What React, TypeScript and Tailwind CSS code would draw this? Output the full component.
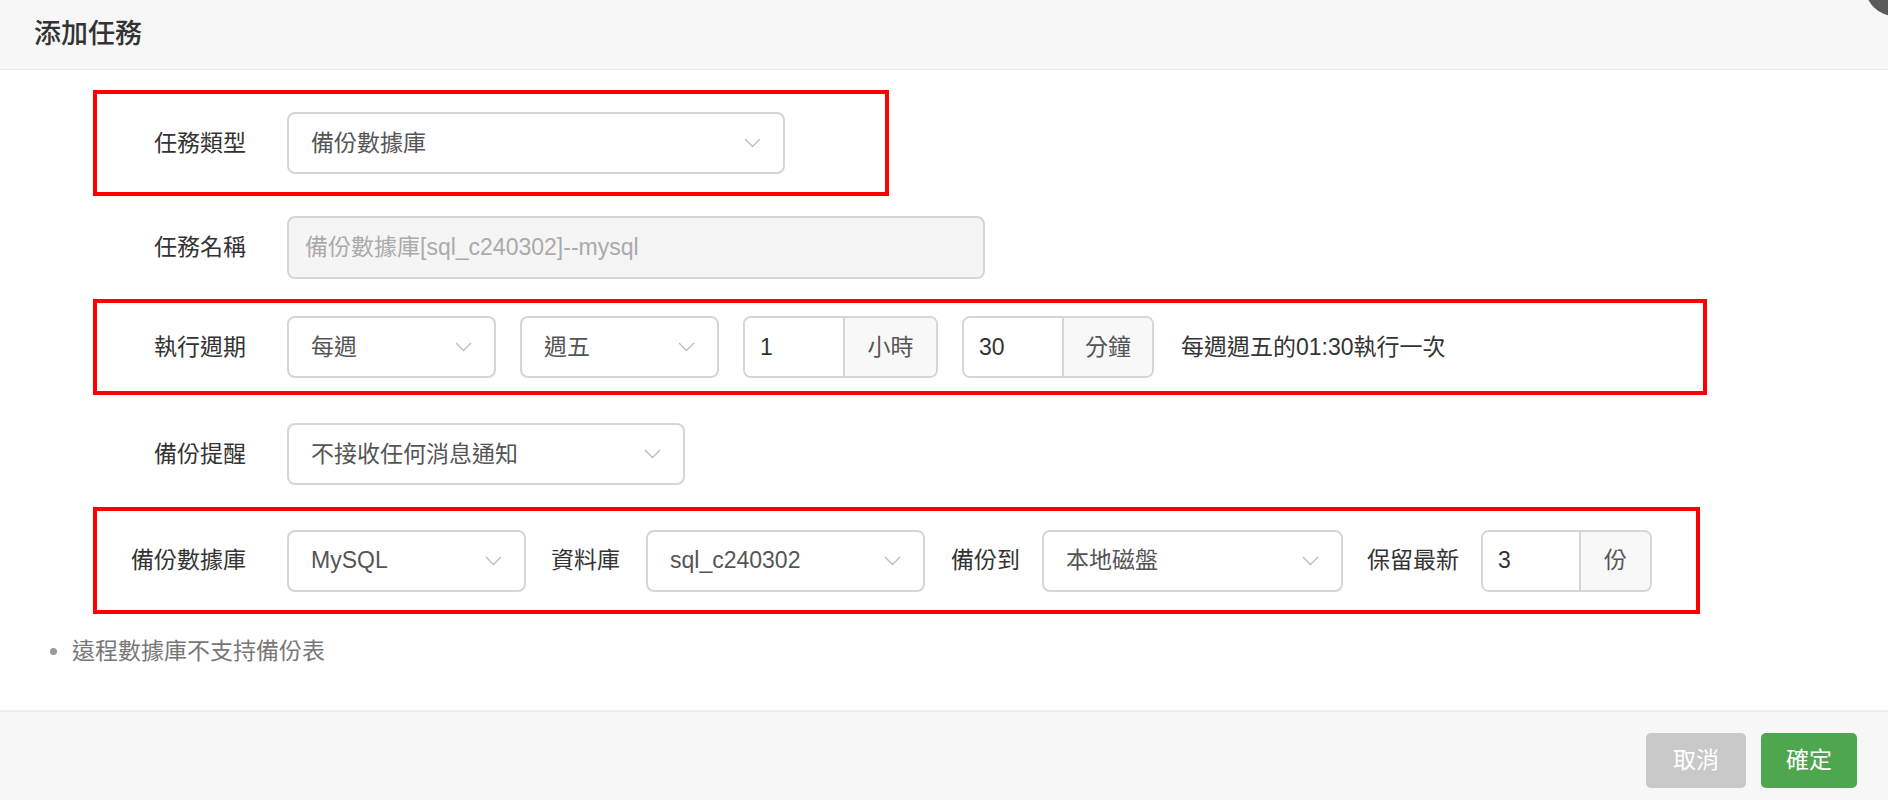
import React from 'react';

const Chevron: React.FC = () => (
  <svg width="17" height="10" viewBox="0 0 17 10" fill="none" className="shrink-0">
    <polyline points="1,1 8.5,8.5 16,1" stroke="#bdbdbd" strokeWidth="1.4" />
  </svg>
);

const Select: React.FC<{ value: string; className: string }> = ({ value, className }) => (
  <div
    className={`flex h-[62px] shrink-0 items-center justify-between rounded-[8px] border-2 border-[#d6d6d6] bg-white pl-[22px] pr-[22px] text-[#555] ${className}`}
  >
    <span>{value}</span>
    <Chevron />
  </div>
);

const UnitInput: React.FC<{ value: string; unit: string; inputW: string; unitW: string }> = ({
  value,
  unit,
  inputW,
  unitW,
}) => (
  <div className="flex h-[62px] shrink-0 overflow-hidden rounded-[8px] border-2 border-[#d6d6d6]">
    <div className={`flex items-center bg-white pl-[15px] text-[#333] ${inputW}`}>{value}</div>
    <div className={`flex items-center justify-center border-l-2 border-[#d6d6d6] bg-[#f8f8f9] text-[#555] ${unitW}`}>
      {unit}
    </div>
  </div>
);

const Row: React.FC<{ label: string; className: string; children: React.ReactNode }> = ({
  label,
  className,
  children,
}) => (
  <div className={`ml-[93px] flex items-center border-4 ${className}`}>
    <div className="w-[149px] shrink-0 text-right text-[#333]">{label}</div>
    <div className="ml-[41px] flex items-center gap-[24px]">{children}</div>
  </div>
);

export default function App() {
  return (
    <div className="relative flex h-[800px] w-[1888px] flex-col overflow-hidden bg-white font-['Liberation_Sans','Noto_Sans_CJK_TC',sans-serif] text-[23px]">
      {/* close button, cut off by the corner */}
      <div className="absolute right-[-37px] top-[-44px] h-[60px] w-[60px] rounded-full bg-[#595959]" />

      {/* Header */}
      <div className="flex h-[70px] shrink-0 items-center border-b border-[#e8e8e8] bg-[#f7f7f7] pl-[34px] text-[27px] font-medium text-[#333]">
        添加任務
      </div>

      {/* Body */}
      <div className="flex-1">
        <Row label="任務類型" className="mt-[20px] h-[106px] w-[796px] border-[#ff0000]">
          <Select value="備份數據庫" className="w-[498px]" />
        </Row>

        <Row label="任務名稱" className="h-[103px] w-[1614px] border-transparent">
          <div className="flex h-[63px] w-[698px] items-center rounded-[8px] border-2 border-[#d6d6d6] bg-[#f5f5f5] pl-[16px] text-[#aaa]">
            備份數據庫[sql_c240302]--mysql
          </div>
        </Row>

        <Row label="執行週期" className="h-[96px] w-[1614px] border-[#ff0000]">
          <Select value="每週" className="w-[209px]" />
          <Select value="週五" className="w-[199px]" />
          <UnitInput value="1" unit="小時" inputW="w-[98px]" unitW="w-[93px]" />
          <UnitInput value="30" unit="分鐘" inputW="w-[98px]" unitW="w-[90px]" />
          <span className="ml-[3px] text-[#333]">每週週五的01:30執行一次</span>
        </Row>

        <Row label="備份提醒" className="h-[112px] w-[1614px] border-transparent pt-[6px]">
          <Select value="不接收任何消息通知" className="w-[398px]" />
        </Row>

        <div className="ml-[93px] flex h-[107px] w-[1607px] items-center border-4 border-[#ff0000]">
          <div className="w-[149px] shrink-0 text-right text-[#333]">備份數據庫</div>
          <div className="ml-[41px] flex items-center">
            <Select value="MySQL" className="w-[239px]" />
            <span className="ml-[25px] text-[#333]">資料庫</span>
            <Select value="sql_c240302" className="ml-[26px] w-[279px]" />
            <span className="ml-[26px] text-[#333]">備份到</span>
            <Select value="本地磁盤" className="ml-[22px] w-[301px]" />
            <span className="ml-[24px] text-[#333]">保留最新</span>
            <div className="ml-[22px]">
              <UnitInput value="3" unit="份" inputW="w-[96px]" unitW="w-[71px]" />
            </div>
          </div>
        </div>

        <div className="flex h-[74px] items-center pl-[50px] text-[#777]">
          <span className="mr-[15px] h-[7px] w-[7px] rounded-full bg-[#999]" />
          遠程數據庫不支持備份表
        </div>
      </div>

      {/* Footer */}
      <div className="flex h-[90px] shrink-0 items-start justify-end gap-[15px] border-t-2 border-[#ebebeb] bg-[#f7f7f7] pr-[31px] pt-[21px]">
        <button className="h-[55px] w-[100px] rounded-[5px] bg-[#c9c9c9] text-white">取消</button>
        <button className="h-[55px] w-[96px] rounded-[5px] bg-[#4ea64e] text-white">確定</button>
      </div>
    </div>
  );
}
